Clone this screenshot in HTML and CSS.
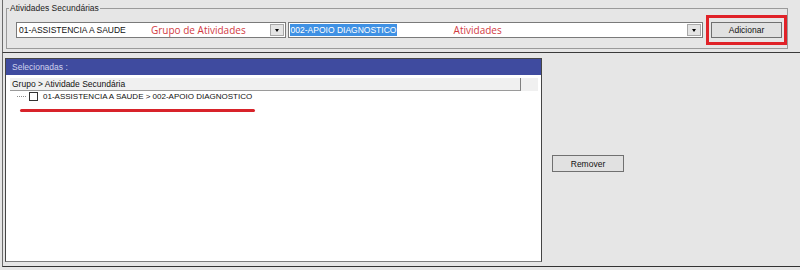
FILE: index.html
```html
<!DOCTYPE html>
<html lang="pt-BR">
<head>
  <meta charset="UTF-8" />
  <title>Atividades Secundárias</title>
  <link rel="stylesheet" href="styles.css">
</head>
<body>

  <div class="window">

    <!-- Selecao de atividades -->
    <div class="top">
      <fieldset class="group">
        <legend>Atividades Secundárias</legend>
        <div class="group-row">
          <div class="combo combo-grupo">
            <span class="combo-value">01-ASSISTENCIA A SAUDE</span>
            <span class="note note-grupo">Grupo de Atividades</span>
            <span class="combo-arrow"></span>
          </div>
          <div class="combo combo-ativ">
            <span class="combo-value selected">002-APOIO DIAGNOSTICO</span>
            <span class="note note-ativ">Atividades</span>
            <span class="combo-arrow"></span>
          </div>
          <div class="highlight-box">
            <button type="button" class="btn btn-add">Adicionar</button>
          </div>
        </div>
      </fieldset>
    </div>

    <!-- Lista de selecionadas -->
    <div class="bottom">
      <div class="panel">
        <div class="panel-title">Selecionadas :</div>
        <div class="panel-body">
          <div class="list-header">
            <div class="col-head">Grupo &gt; Atividade Secundária</div>
          </div>
          <div class="tree-item">
            <span class="tree-line"></span>
            <span class="check"></span>
            <span class="tree-text">01-ASSISTENCIA A SAUDE &gt; 002-APOIO DIAGNOSTICO</span>
          </div>
          <div class="underline"></div>
        </div>
      </div>
      <div class="side">
        <button type="button" class="btn btn-remove">Remover</button>
      </div>
    </div>

  </div>

</body>
</html>
```

FILE: styles.css
```css
body {
  margin: 0;
  background: #e6e6e6;
  font-family: "Liberation Sans", Arial, sans-serif;
  font-size: 8.5px;
  color: #111;
}

.window {
  width: 800px;
  height: 270px;
  padding-left: 2px;
  box-sizing: border-box;
  background: #e6e6e6;
  overflow: hidden;
}

.top {
  height: 49px;
  padding-top: 3px;
  border-left: 1px solid #6b6b6b;
  border-bottom: 1px solid #3a3a3a;
}

.group {
  margin: 0 12px 0 3px;
  padding: 2px 0 3px 0;
  border: 1px solid #9a9a9a;
  min-width: 0;
}

.group legend {
  margin-left: 2px;
  padding: 0 1px;
  line-height: 10px;
  color: #222;
}

.group-row {
  display: flex;
  align-items: center;
  padding-left: 9px;
}

.combo {
  position: relative;
  display: flex;
  align-items: center;
  height: 16px;
  box-sizing: border-box;
  border: 1px solid #7a7a7a;
  background: #fff;
}

.combo-grupo {
  width: 270px;
}

.combo-ativ {
  width: 416px;
  margin-left: 2px;
}

.combo-value {
  padding-left: 2px;
  line-height: 12px;
  white-space: nowrap;
}

.combo-value.selected {
  margin-left: 1px;
  padding: 0 1px;
  background: #3f91e4;
  color: #fff;
}

.combo-arrow {
  position: relative;
  margin-left: auto;
  margin-right: 1px;
  width: 14px;
  height: 12px;
  background: #e4e4e4;
  border: 1px solid #a8a8a8;
  box-sizing: border-box;
}

.combo-arrow::after {
  content: "";
  position: absolute;
  left: 4px;
  top: 4px;
  border-left: 2.5px solid transparent;
  border-right: 2.5px solid transparent;
  border-top: 3px solid #000;
}

/* anotacoes em vermelho */
.note {
  position: absolute;
  top: 0;
  line-height: 14px;
  font-family: "Open Sans", Arial, sans-serif;
  font-size: 10px;
  color: #d23a3f;
  white-space: nowrap;
}

.note-grupo {
  left: 134px;
}

.note-ativ {
  left: 165px;
}

.highlight-box {
  margin-left: 3px;
  height: 30px;
  box-sizing: border-box;
  padding: 4px 2px;
  border: 3px solid #e02228;
}

.btn {
  display: block;
  padding: 0;
  font-family: "Liberation Sans", Arial, sans-serif;
  font-size: 8.5px;
  color: #111;
  background: #e1e1e1;
  border: 1px solid #707070;
  border-radius: 0;
  cursor: pointer;
}

.btn-add {
  width: 71px;
  height: 16px;
}

.bottom {
  display: flex;
  align-items: flex-start;
  height: 208px;
  padding-top: 5px;
  border-left: 1px solid #6b6b6b;
  border-bottom: 1px solid #333;
}

.panel {
  display: flex;
  flex-direction: column;
  margin-left: 2px;
  width: 537px;
  height: 204px;
  box-sizing: border-box;
  border: 1px solid #454545;
  border-bottom-color: #7d7d7d;
}

.panel-title {
  height: 16px;
  line-height: 16px;
  padding-left: 6px;
  background: #3f4b9f;
  color: #cfd3ee;
}

.panel-body {
  flex: 1;
  padding: 3px 3px 0 4px;
  background: #fff;
}

.list-header {
  height: 13px;
  background: #f0f0f0;
}

.col-head {
  width: 511px;
  height: 13px;
  box-sizing: border-box;
  padding-left: 2px;
  line-height: 12px;
  border-right: 1px solid #808080;
  border-bottom: 1px solid #9a9a9a;
}

.tree-item {
  display: flex;
  align-items: center;
  height: 11px;
}

.tree-line {
  margin-left: 7px;
  width: 9px;
  border-top: 1px dotted #8a8a8a;
}

.check {
  margin-left: 3px;
  width: 9px;
  height: 9px;
  box-sizing: border-box;
  border: 1px solid #333;
  background: #fff;
}

.tree-text {
  margin-left: 5px;
  font-size: 8px;
  white-space: nowrap;
}

.underline {
  margin: 7px 0 0 10px;
  width: 235px;
  height: 3px;
  border-radius: 2px;
  background: #d8232a;
}

.side {
  margin-left: 10px;
  padding-top: 97px;
}

.btn-remove {
  width: 72px;
  height: 17px;
}
```
